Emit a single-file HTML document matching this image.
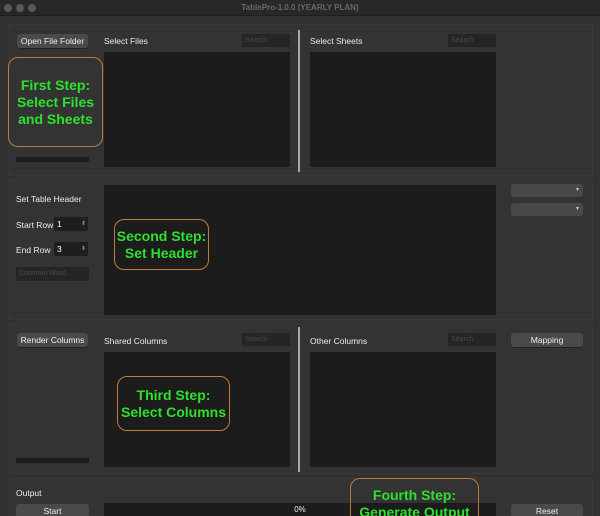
<!DOCTYPE html>
<html style="width:600px;height:516px;overflow:hidden"><head><meta charset="utf-8"><style>
*{margin:0;padding:0;box-sizing:border-box}
html,body{width:600px;height:516px;overflow:hidden}
body{background:#323232;font-family:"Liberation Sans",sans-serif;position:relative;color:#e8e8e8}
.a{position:absolute}
.tb{left:0;top:0;width:600px;height:16px;background:#2a272b;border-bottom:1px solid #1e1e1e}
.dot{width:8px;height:8px;border-radius:50%;background:#5a585b;top:4px}
.grp{border:1px solid #3a3a3a;background:#333}
.list{background:#1c1c1c}
.btn{background:#4a4a4a;border-radius:3px;font-size:8.5px;color:#eee;text-align:center;line-height:14px;box-shadow:0 1px 0 #222}
.lbl{font-size:8.5px;color:#eee}
.srch{background:#252525;font-size:7px;color:#4a4a4a;padding-left:3px;line-height:13px}
.step{border:1px solid #c07a3a;border-radius:10px;color:#2ee02e;font-weight:bold;text-align:center;display:flex;align-items:center;justify-content:center;background:#1c1c1c;line-height:17px;font-size:14px}
.pb{background:#1c1c1c;height:5px}
.vl{width:2px;background:#a8a8a8}
.dd{background:#484848;border-radius:3px;height:13px;font-size:6px;color:#ccc;text-align:right;padding-right:4px;line-height:13px}
.spin{background:#1e1e1e;font-size:8.5px;color:#fff;padding-left:3px;line-height:14px}
</style></head><body>
<div class="a tb"></div>
<div class="a dot" style="left:4px"></div><div class="a dot" style="left:16px"></div><div class="a dot" style="left:28px"></div>
<div class="a" style="left:0;width:600px;top:3px;text-align:center;font-size:8px;font-weight:bold;color:#6a666a">TablePro-1.0.0 (YEARLY PLAN)</div>

<div class="a grp" style="left:9px;top:24px;width:584px;height:152px"></div>
<div class="a grp" style="left:9px;top:180px;width:584px;height:140px"></div>
<div class="a grp" style="left:9px;top:324px;width:584px;height:150px"></div>
<div class="a grp" style="left:9px;top:478px;width:584px;height:38px"></div>

<div class="a btn" style="left:17px;top:34px;width:71px">Open File Folder</div>
<div class="a lbl" style="left:104px;top:36px">Select Files</div>
<div class="a srch" style="left:242px;top:34px;width:48px">Search</div>
<div class="a list" style="left:104px;top:52px;width:186px;height:115px"></div>
<div class="a vl" style="left:298px;top:30px;height:142px"></div>
<div class="a lbl" style="left:310px;top:36px">Select Sheets</div>
<div class="a srch" style="left:448px;top:34px;width:48px">Search</div>
<div class="a list" style="left:310px;top:52px;width:186px;height:115px"></div>
<div class="a step" style="left:8px;top:57px;width:95px;height:90px;background:#333">First Step:<br>Select Files<br>and Sheets</div>
<div class="a pb" style="left:16px;top:157px;width:73px"></div>

<div class="a lbl" style="left:16px;top:194px">Set Table Header</div>
<div class="a lbl" style="left:16px;top:220px">Start Row</div>
<div class="a spin" style="left:54px;top:217px;width:34px">1<span style="float:right;color:#888;font-size:6px;padding-right:2px">⬍</span></div>
<div class="a lbl" style="left:16px;top:245px">End Row</div>
<div class="a spin" style="left:54px;top:242px;width:34px">3<span style="float:right;color:#888;font-size:6px;padding-right:2px">⬍</span></div>
<div class="a srch" style="left:16px;top:267px;width:73px;height:14px;font-size:7px">Common Word...</div>
<div class="a list" style="left:104px;top:185px;width:392px;height:130px"></div>
<div class="a step" style="left:114px;top:219px;width:95px;height:51px">Second Step:<br>Set Header</div>
<div class="a dd" style="left:511px;top:184px;width:72px">▾</div>
<div class="a dd" style="left:511px;top:203px;width:72px">▾</div>

<div class="a btn" style="left:17px;top:333px;width:71px">Render Columns</div>
<div class="a lbl" style="left:104px;top:336px">Shared Columns</div>
<div class="a srch" style="left:242px;top:333px;width:48px">Search</div>
<div class="a list" style="left:104px;top:352px;width:186px;height:115px"></div>
<div class="a vl" style="left:298px;top:327px;height:145px"></div>
<div class="a lbl" style="left:310px;top:336px">Other Columns</div>
<div class="a srch" style="left:448px;top:333px;width:48px">Search</div>
<div class="a list" style="left:310px;top:352px;width:186px;height:115px"></div>
<div class="a btn" style="left:511px;top:333px;width:72px">Mapping</div>
<div class="a step" style="left:117px;top:376px;width:113px;height:55px">Third Step:<br>Select Columns</div>
<div class="a pb" style="left:16px;top:458px;width:73px"></div>

<div class="a lbl" style="left:16px;top:488px">Output</div>
<div class="a btn" style="left:16px;top:504px;width:73px">Start</div>
<div class="a list" style="left:104px;top:503px;width:392px;height:13px;font-size:8px;text-align:center;line-height:14px;color:#eee">0%</div>
<div class="a step" style="left:350px;top:478px;width:129px;height:38px;border-bottom:none;border-radius:10px 10px 0 0;background:transparent;align-items:flex-start;padding-top:8px;overflow:hidden">Fourth Step:<br>Generate Output</div>
<div class="a btn" style="left:511px;top:504px;width:72px">Reset</div>
</body></html>
